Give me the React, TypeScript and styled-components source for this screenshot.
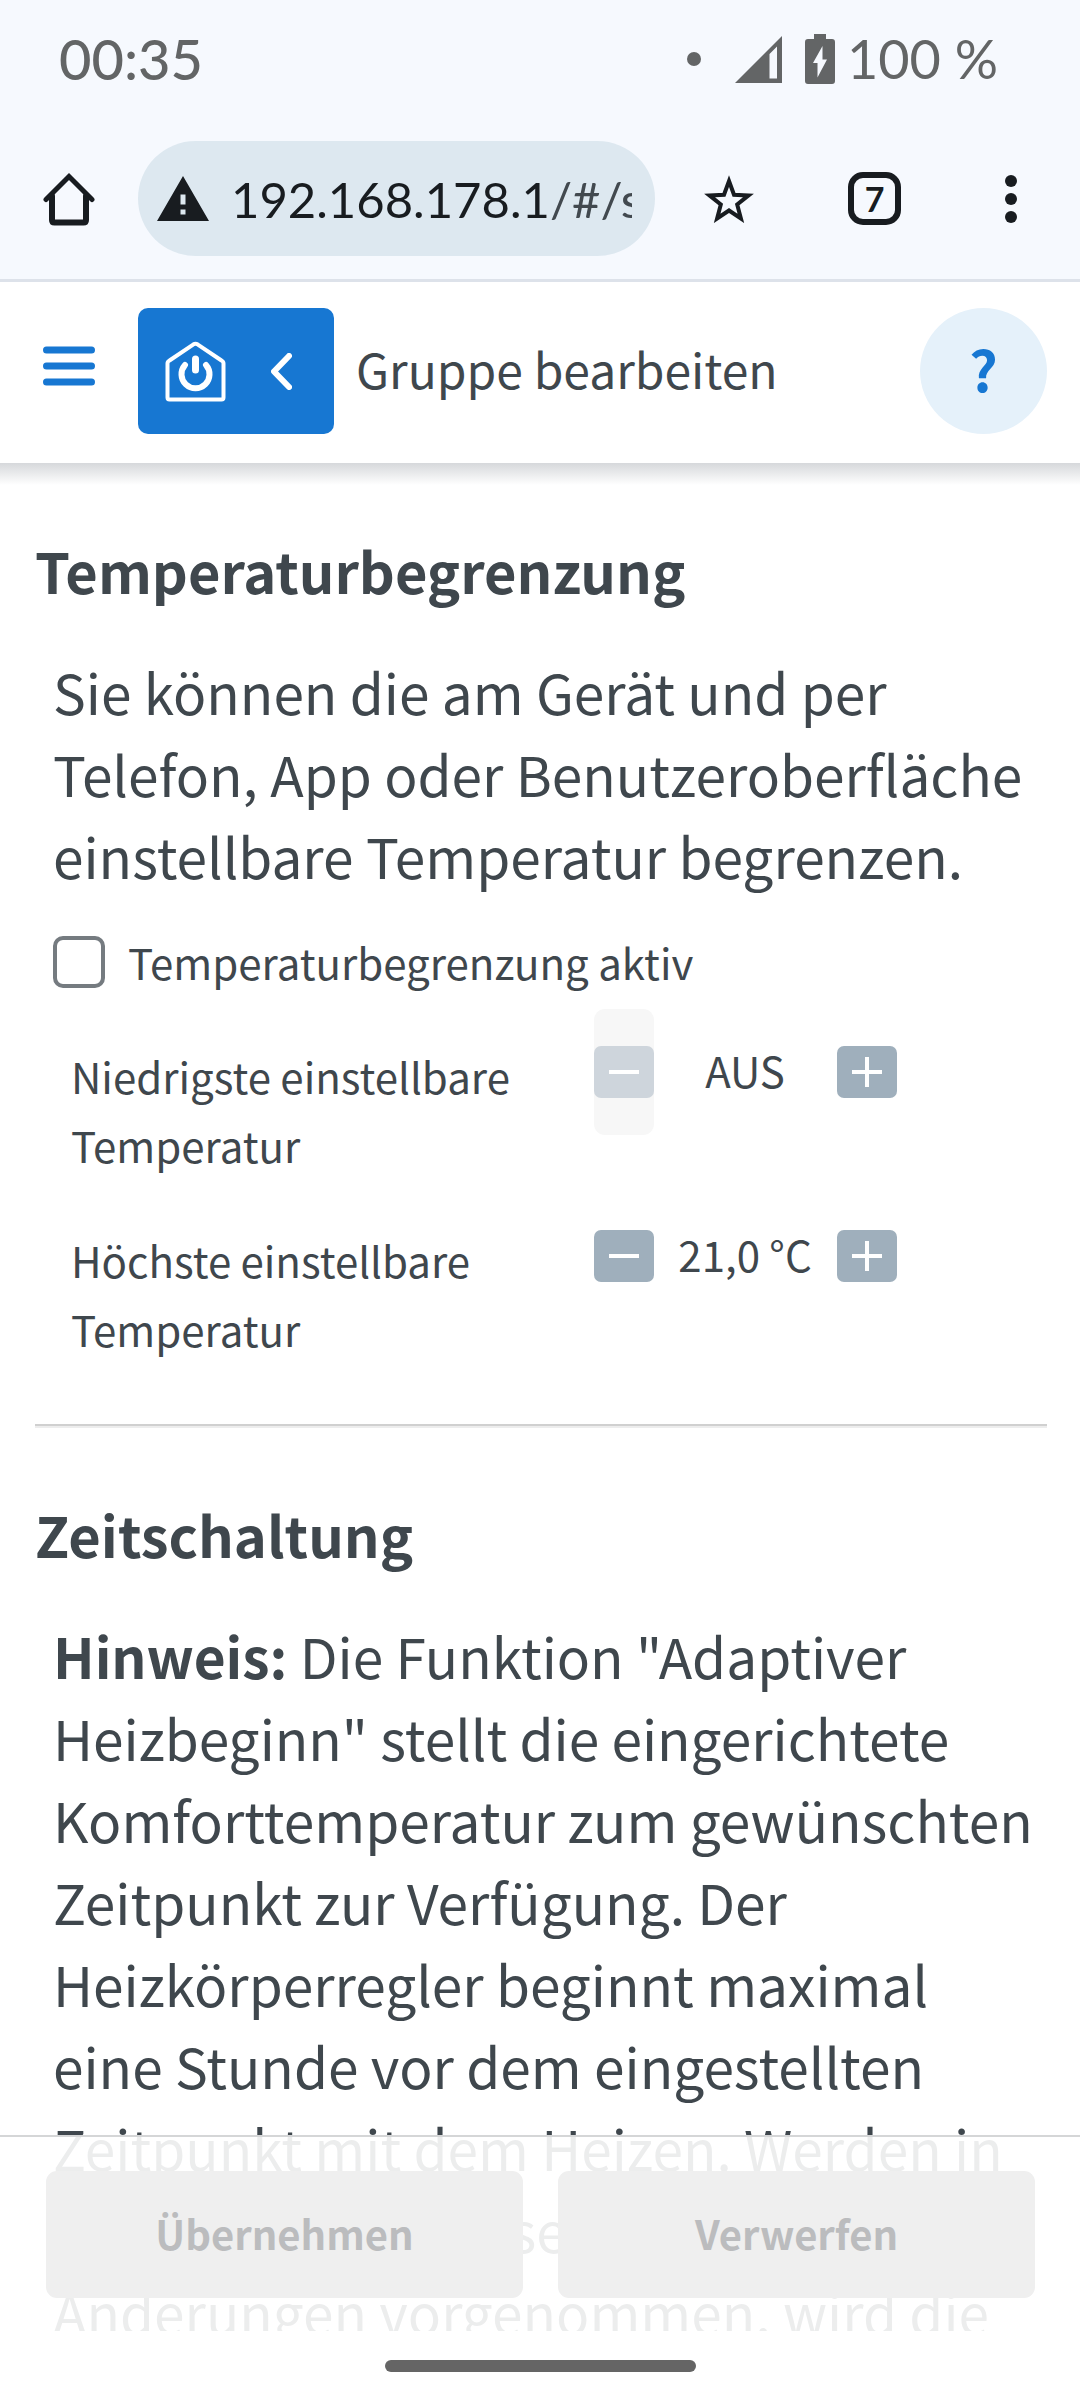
import React, { useState } from "react";
import styled, { createGlobalStyle } from "styled-components";

const color = {
  text: "#3f474d",
  blue: "#1777d2",
  paleBlue: "#e5f1fa",
  chrome: "#f6f9fe",
  omnibox: "#dde8f0",
  ink: "#181c20",
  status: "#636566",
  stepper: "#9fafbc",
};

const GlobalStyle = createGlobalStyle`
  *, *::before, *::after { box-sizing: border-box; }
  body {
    margin: 0;
    background: #fff;
    color: ${color.text};
    font-family: "Noto Sans CJK SC", "Noto Sans", sans-serif;
  }
  button {
    margin: 0;
    padding: 0;
    border: 0;
    background: none;
    color: inherit;
    font: inherit;
    cursor: pointer;
  }
  button:disabled { cursor: default; }
  svg { display: block; flex: none; }
`;

const Screen = styled.div`
  display: flex;
  flex-direction: column;
  height: 100vh;
  overflow: hidden;
`;

const StatusBar = styled.div`
  flex: none;
  display: flex;
  align-items: center;
  justify-content: space-between;
  height: 118px;
  padding: 0 82px 0 59px;
  background: ${color.chrome};
  color: ${color.status};
  font-family: Lato, sans-serif;
  font-size: 54px;
  line-height: 64px;
`;

const Clock = styled.time`
  font-size: 56px;
  font-weight: 500;
`;

const StatusIcons = styled.div`
  display: flex;
  align-items: center;
`;

const StatusDot = styled.span`
  width: 14px;
  height: 14px;
  margin-right: 34px;
  border-radius: 50%;
  background: currentColor;
`;

const Battery = styled.span`
  display: flex;
  align-items: center;
  gap: 12px;
  margin-left: 23px;
`;

const BrowserBar = styled.div`
  flex: none;
  display: flex;
  align-items: center;
  height: 164px;
  padding: 0 63px 0 43px;
  border-bottom: 3px solid #dde2ea;
  background: ${color.chrome};
  color: ${color.ink};
`;

const Omnibox = styled.button`
  flex: 1;
  min-width: 0;
  display: flex;
  align-items: center;
  gap: 22px;
  height: 115px;
  margin: 0 49px 0 43px;
  padding: 0 23px 0 19px;
  border-radius: 58px;
  background: ${color.omnibox};
`;

const Address = styled.span`
  flex: 1;
  min-width: 0;
  overflow: hidden;
  white-space: nowrap;
  text-align: left;
  font-family: Lato, sans-serif;
  font-size: 49px;
  line-height: 64px;
`;

const AddressPath = styled.span`
  color: #42494f;
`;

const BrowserActions = styled.div`
  display: flex;
  align-items: center;
  gap: 94px;
`;

const TabCount = styled.button`
  display: flex;
  align-items: center;
  justify-content: center;
  width: 53px;
  height: 53px;
  border: 6px solid currentColor;
  border-radius: 15px;
  font-family: Lato, sans-serif;
  font-size: 34px;
  font-weight: 700;
  line-height: 40px;
`;

const MoreButton = styled.button`
  margin-left: 10px;
`;

const AppHeader = styled.header`
  flex: none;
  position: relative;
  z-index: 2;
  display: flex;
  align-items: center;
  height: 181px;
  padding: 0 33px 3px 43px;
  background: #fff;

  &::after {
    content: "";
    position: absolute;
    top: 100%;
    right: 0;
    left: 0;
    height: 22px;
    background: linear-gradient(#d6d8db, rgba(255, 255, 255, 0));
    pointer-events: none;
  }
`;

const MenuButton = styled.button`
  color: ${color.blue};
  padding-bottom: 10px;
`;

const BackButton = styled.button`
  display: flex;
  align-items: center;
  gap: 45px;
  height: 126px;
  margin: 0 22px 0 43px;
  padding: 0 42px 0 27px;
  border-radius: 10px;
  background: ${color.blue};
  color: #fff;
`;

const Title = styled.h1`
  flex: 1;
  margin: 0;
  padding-bottom: 6px;
  font-size: 48px;
  font-weight: 400;
  line-height: 70px;
`;

const HelpButton = styled.button`
  width: 127px;
  height: 126px;
  padding-bottom: 6px;
  border-radius: 50%;
  background: ${color.paleBlue};
  color: ${color.blue};
  font-size: 56px;
  font-weight: 700;
  line-height: 82px;
`;

const Body = styled.div`
  flex: 1;
  min-height: 0;
  position: relative;
`;

const Content = styled.main`
  height: 100%;
  padding: 66px 33px 0 35px;
  overflow-y: auto;
  scrollbar-width: none;
`;

const SectionTitle = styled.h2`
  margin: 0 0 39px;
  font-size: 56px;
  font-weight: 700;
  line-height: 82px;
`;

const Paragraph = styled.p`
  margin: 0;
  padding: 0 8px 0 18px;
  font-size: 55px;
  line-height: 82px;
`;

const Divider = styled.hr`
  height: 4px;
  margin: 61px 0 65px;
  border: 0;
  border-top: 2px solid #d0d0d0;
  background: #ededed;
`;

const CheckRow = styled.label`
  display: flex;
  align-items: center;
  gap: 23px;
  margin: 31px 18px 12px;
  font-size: 42px;
  line-height: 70px;
`;

const CheckBox = styled.input`
  appearance: none;
  flex: none;
  width: 52px;
  height: 52px;
  margin: 0;
  border: 4px solid #757b80;
  border-radius: 10px;
  background: #fff;
  &:checked {
    border-color: ${color.blue};
    background: ${color.blue};
  }
`;

const Settings = styled.div`
  display: grid;
  gap: 14px;
  padding: 0 18px 0 36px;
`;

const SettingRow = styled.div`
  display: grid;
  grid-template-columns: 6fr 5fr;
  align-items: start;
  font-size: 42px;
`;

const SettingName = styled.span`
  padding-top: 32px;
  line-height: 69px;
`;

const Stepper = styled.div`
  display: grid;
  grid-template-columns: 60px 1fr 60px;
  align-items: center;
  width: 303px;
  height: 126px;
`;

const StepButton = styled.button`
  display: flex;
  align-items: center;
  height: 126px;
  border-radius: 11px;
  &:disabled { background: #f7f7f7; }
`;

const StepFace = styled.span<{ $dim: boolean }>`
  flex: 1;
  display: flex;
  align-items: center;
  justify-content: center;
  height: 52px;
  border-radius: 7px;
  background: ${(p) => (p.$dim ? "#ced5dc" : color.stepper)};
  color: #fff;
`;

const StepValue = styled.output`
  padding-bottom: 4px;
  text-align: center;
  white-space: nowrap;
  line-height: 62px;
`;

const ActionBar = styled.footer`
  position: absolute;
  right: 0;
  bottom: 0;
  left: 0;
  display: grid;
  grid-template-columns: 1fr 1fr;
  gap: 35px;
  padding: 34px 45px 33px 46px;
  border-top: 2px solid #d5d6d7;
  background: rgba(255, 255, 255, 0.9);
`;

const ActionButton = styled.button`
  height: 127px;
  padding-bottom: 4px;
  border-radius: 11px;
  background: #efefef;
  color: #bbbcbe;
  font-size: 40px;
  font-weight: 700;
  line-height: 62px;
`;

const GestureArea = styled.div`
  flex: none;
  display: flex;
  align-items: center;
  justify-content: center;
  height: 69px;
`;

const GestureHandle = styled.span`
  width: 311px;
  height: 12px;
  border-radius: 6px;
  background: #656565;
`;

const SignalIcon = () => (
  <svg width="47" height="47" viewBox="0 0 47 47" fill="currentColor" aria-hidden="true">
    <path fillRule="evenodd" d="M0 47 47 0v47ZM34.500 18v24.500h7.500V10.500Z" />
  </svg>
);

const BatteryIcon = () => (
  <svg width="30" height="50" viewBox="0 0 30 50" fill="currentColor" aria-hidden="true">
    <path
      fillRule="evenodd"
      d="M9 0h12v5h6a3 3 0 0 1 3 3v39a3 3 0 0 1-3 3H3a3 3 0 0 1-3-3V8a3 3 0 0 1 3-3h6ZM17.500 12 8 29h4.500v14.500L22 25.500h-4.500Z"
    />
  </svg>
);

const HomeIcon = () => (
  <svg
    width="52"
    height="54"
    viewBox="0 0 52 54"
    fill="none"
    stroke="currentColor"
    strokeWidth="6"
    strokeLinecap="round"
    aria-hidden="true"
  >
    <path d="M3 27.500 26 4.500l23 23" strokeWidth="5" />
    <path d="M9 24v24q0 2.500 2.500 2.500h29q2.500 0 2.500-2.500V24" />
  </svg>
);

const WarningIcon = () => (
  <svg width="52" height="45" viewBox="0 0 52 45" fill="currentColor" aria-hidden="true">
    <path fillRule="evenodd" d="M26 0 52 45H0ZM23.500 18.500v10h5v-10Zm0 15v5h5v-5Z" />
  </svg>
);

const StarIcon = () => (
  <svg width="50" height="48" viewBox="0 0 50 48" fill="none" stroke="currentColor" strokeWidth="4" aria-hidden="true">
    <path d="m25 6 5 13.700 14.500.7-11.300 9 3.700 14.100L25 35.500l-11.900 8 3.700-14.100-11.300-9 14.500-.7Z" />
  </svg>
);

const MoreIcon = () => (
  <svg width="12" height="48" viewBox="0 0 12 48" fill="currentColor" aria-hidden="true">
    <circle cx="6" cy="6" r="6" />
    <circle cx="6" cy="24" r="6" />
    <circle cx="6" cy="42" r="6" />
  </svg>
);

const MenuIcon = () => (
  <svg width="52" height="40" viewBox="0 0 52 40" stroke="currentColor" strokeWidth="7" strokeLinecap="round" aria-hidden="true">
    <path d="M3.500 4h45M3.500 20h45M3.500 36h45" />
  </svg>
);

const SmartHomeIcon = () => (
  <svg
    width="61"
    height="61"
    viewBox="0 0 61 61"
    fill="none"
    stroke="currentColor"
    strokeWidth="4"
    strokeLinecap="round"
    strokeLinejoin="round"
    aria-hidden="true"
  >
    <path d="M4.500 19.500q-2 1-2 3v34q0 2 2 2h52q2 0 2-2v-34q0-2-2-3L32.500 3.300q-2-1.200-4 0Z" />
    <path d="M20 24a14 14 0 1 0 21 0" strokeWidth="6" />
    <path d="M30.500 18v11" strokeWidth="7" />
  </svg>
);

const ChevronIcon = () => (
  <svg
    width="21"
    height="37"
    viewBox="0 0 21 37"
    fill="none"
    stroke="currentColor"
    strokeWidth="6"
    strokeLinecap="round"
    strokeLinejoin="round"
    aria-hidden="true"
  >
    <path d="M18 3 3 18.500 18 34" />
  </svg>
);

const MinusIcon = () => (
  <svg width="30" height="30" viewBox="0 0 30 30" stroke="currentColor" strokeWidth="4" aria-hidden="true">
    <path d="M0 15h30" />
  </svg>
);

const PlusIcon = () => (
  <svg width="30" height="30" viewBox="0 0 30 30" stroke="currentColor" strokeWidth="4" aria-hidden="true">
    <path d="M0 15h30M15 0v30" />
  </svg>
);

const LOWEST = 7.5;
const HIGHEST = 28;

const formatTemperature = (value: number) =>
  value <= LOWEST ? "AUS" : `${value.toFixed(1).replace(".", ",")} °C`;

interface TemperatureSettingProps {
  name: string;
  initial: number;
}

const TemperatureSetting = ({ name, initial }: TemperatureSettingProps) => {
  const [value, setValue] = useState(initial);
  const atMin = value <= LOWEST;
  const atMax = value >= HIGHEST;
  return (
    <SettingRow role="group" aria-label={name}>
      <SettingName>{name}</SettingName>
      <Stepper>
        <StepButton type="button" aria-label="Verringern" disabled={atMin} onClick={() => setValue(value - 0.5)}>
          <StepFace $dim={atMin}>
            <MinusIcon />
          </StepFace>
        </StepButton>
        <StepValue>{formatTemperature(value)}</StepValue>
        <StepButton type="button" aria-label="Erhöhen" disabled={atMax} onClick={() => setValue(value + 0.5)}>
          <StepFace $dim={atMax}>
            <PlusIcon />
          </StepFace>
        </StepButton>
      </Stepper>
    </SettingRow>
  );
};

export default function App() {
  return (
    <>
      <GlobalStyle />
      <Screen>
        <StatusBar>
          <Clock>00:35</Clock>
          <StatusIcons>
            <StatusDot />
            <SignalIcon />
            <Battery>
              <BatteryIcon />
              <span>100 %</span>
            </Battery>
          </StatusIcons>
        </StatusBar>

        <BrowserBar>
          <button type="button" aria-label="Startseite">
            <HomeIcon />
          </button>
          <Omnibox type="button">
            <WarningIcon />
            <Address>
              192.168.178.1<AddressPath>/#/smart-home</AddressPath>
            </Address>
          </Omnibox>
          <BrowserActions>
            <button type="button" aria-label="Lesezeichen">
              <StarIcon />
            </button>
            <TabCount type="button">7</TabCount>
            <MoreButton type="button" aria-label="Mehr">
              <MoreIcon />
            </MoreButton>
          </BrowserActions>
        </BrowserBar>

        <AppHeader>
          <MenuButton type="button" aria-label="Menü">
            <MenuIcon />
          </MenuButton>
          <BackButton type="button" aria-label="Zurück">
            <SmartHomeIcon />
            <ChevronIcon />
          </BackButton>
          <Title>Gruppe bearbeiten</Title>
          <HelpButton type="button">?</HelpButton>
        </AppHeader>

        <Body>
          <Content>
            <section>
              <SectionTitle>Temperaturbegrenzung</SectionTitle>
              <Paragraph>
                Sie können die am Gerät und per Telefon, App oder Benutzeroberfläche einstellbare Temperatur begrenzen.
              </Paragraph>
              <CheckRow>
                <CheckBox type="checkbox" />
                Temperaturbegrenzung aktiv
              </CheckRow>
              <Settings>
                <TemperatureSetting name="Niedrigste einstellbare Temperatur" initial={LOWEST} />
                <TemperatureSetting name="Höchste einstellbare Temperatur" initial={21} />
              </Settings>
            </section>
            <Divider />
            <section>
              <SectionTitle>Zeitschaltung</SectionTitle>
              <Paragraph>
                <strong>Hinweis:</strong> Die Funktion "Adaptiver Heizbeginn" stellt die eingerichtete
                Komforttemperatur zum gewünschten Zeitpunkt zur Verfügung. Der Heizkörperregler beginnt maximal
                eine Stunde vor dem eingestellten Zeitpunkt mit dem Heizen. Werden in dieser Aufheizphase manuelle
                Änderungen vorgenommen, wird die
              </Paragraph>
            </section>
          </Content>
          <ActionBar>
            <ActionButton type="button" disabled>
              Übernehmen
            </ActionButton>
            <ActionButton type="button" disabled>
              Verwerfen
            </ActionButton>
          </ActionBar>
        </Body>

        <GestureArea>
          <GestureHandle />
        </GestureArea>
      </Screen>
    </>
  );
}
